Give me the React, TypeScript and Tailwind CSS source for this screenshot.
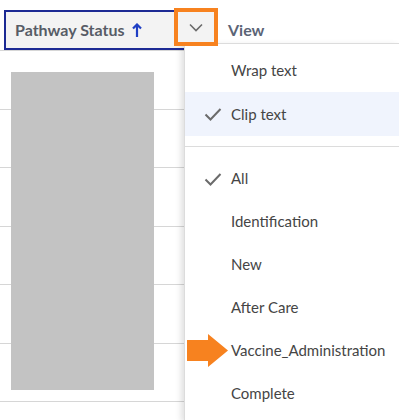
import React from 'react';

const rows = [0, 1, 2, 3, 4, 5, 6];

const menuTop = [
  { label: 'Wrap text', checked: false, active: false },
  { label: 'Clip text', checked: true, active: true },
];

const menuFilter = [
  { label: 'All', checked: true },
  { label: 'Identification', checked: false },
  { label: 'New', checked: false },
  { label: 'After Care', checked: false },
  { label: 'Vaccine_Administration', checked: false },
  { label: 'Complete', checked: false },
];

const Check = () => (
  <svg width="18" height="14" viewBox="0 0 18 14" fill="none">
    <path d="M1.5 7.5 L6.5 12.5 L16.5 2" stroke="#6b6b6b" strokeWidth="2" />
  </svg>
);

const MenuItem = ({ label, checked, active }: { label: string; checked: boolean; active?: boolean }) => (
  <div className={`flex h-[43px] items-center ${active ? 'bg-[#f0f4fd] h-[44px]' : ''}`}>
    <div className="flex w-[46px] justify-end pr-[9px]">{checked && <Check />}</div>
    <span className="text-[15px] text-[#454545]">{label}</span>
  </div>
);

export default function App() {
  return (
    <div className="relative h-[420px] w-[399px] overflow-hidden bg-white" style={{ fontFamily: 'Lato, "Open Sans", sans-serif' }}>
      <div className="flex">
        {/* table column */}
        <div className="w-[184px] shrink-0">
          <div className="border-b border-[#d6d6d6] pt-[10px]">
            <div className="ml-[4px] flex h-[40px] items-center gap-[7px] border-2 border-r-0 border-[#1c2a94] bg-[#f3f3f3] pl-[9px]">
              <span className="text-[16px] font-bold text-[#575c66]">Pathway Status</span>
              <svg width="10" height="15" viewBox="0 0 10 15" fill="none">
                <path d="M5 14 V2 M1 5.5 L5 1.5 L9 5.5" stroke="#1f3fc4" strokeWidth="2.2" />
              </svg>
            </div>
          </div>
          {rows.map((r) => (
            <div key={r} className="h-[58.5px] border-b border-[#d6d6d6]" />
          ))}
        </div>

        {/* view menu */}
        <div className="flex-1">
          <div className="flex h-[43px] items-center pl-[44px] pt-[17px]">
            <span className="text-[16px] font-bold text-[#5b6476]">View</span>
          </div>
          <div className="h-[377px] border-l border-t border-[#dcdcdc] bg-white pt-[5px] shadow-[-3px_2px_6px_rgba(0,0,0,0.12)]">
            {menuTop.map((m) => (
              <MenuItem key={m.label} {...m} />
            ))}
            <div className="mt-[10px] mb-[10px] border-t border-[#dcdcdc]" />
            {menuFilter.map((m) => (
              <MenuItem key={m.label} {...m} />
            ))}
          </div>
        </div>
      </div>

      {/* redaction block */}
      <div className="absolute left-[11px] top-[72px] h-[318px] w-[143px] bg-[#c3c3c3]" />

      {/* highlighted dropdown trigger */}
      <div className="absolute left-[174px] top-[8px] flex h-[38px] w-[44px] items-center justify-center border-4 border-[#f7821f] bg-[#f3f3f3]">
        <svg width="14" height="9" viewBox="0 0 14 9" fill="none">
          <path d="M1 1.5 L7 7.5 L13 1.5" stroke="#6b6b6b" strokeWidth="1.6" />
        </svg>
      </div>

      {/* annotation arrow */}
      <svg className="absolute left-[187px] top-[334px]" width="42" height="33" viewBox="0 0 42 33">
        <polygon points="0,6 21,6 21,0 41,16.5 21,33 21,27 0,27" fill="#f7821f" />
      </svg>
    </div>
  );
}
